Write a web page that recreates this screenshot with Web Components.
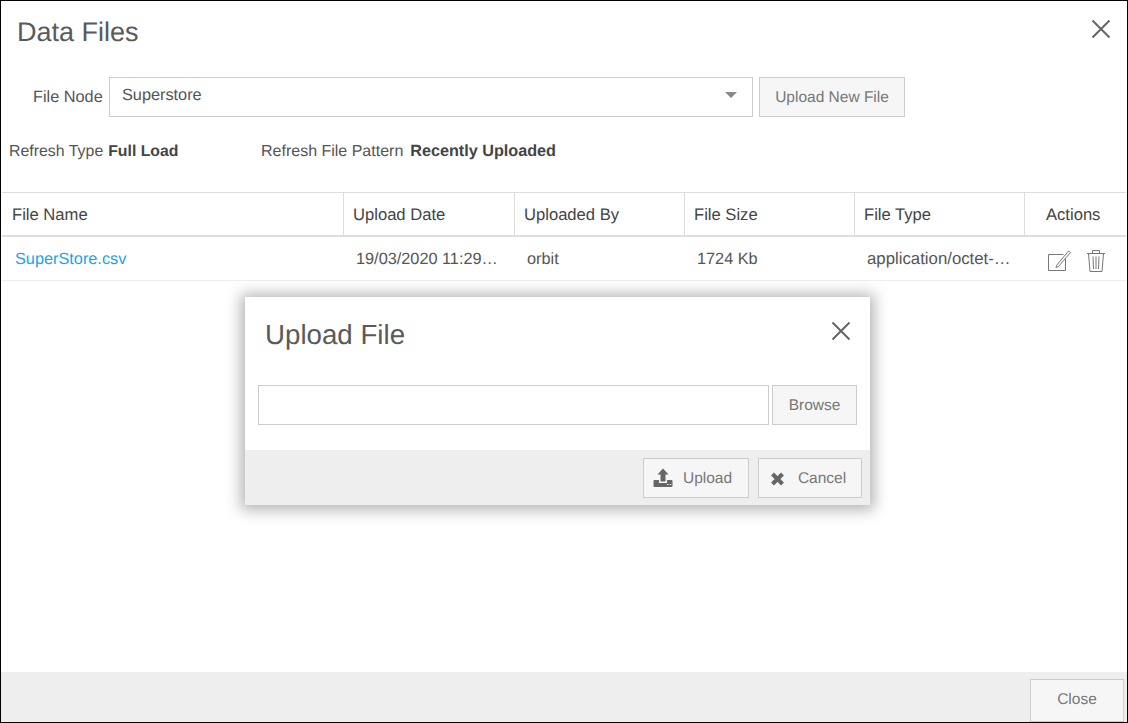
<!DOCTYPE html>
<html>
<head>
<meta charset="utf-8">
<title>Data Files</title>
<style>
html, body { margin: 0; padding: 0; background: #fff; }
body { font-family: "Liberation Sans", Arial, sans-serif; color: #555; text-rendering: geometricPrecision; }
</style>
</head>
<body>
<data-files-dialog></data-files-dialog>

<script>
const closeIcon = `<svg class="x" width="20" height="20" viewBox="0 0 20 20"><path d="M1.5 1.5L18.5 18.5M18.5 1.5L1.5 18.5" stroke="#666" stroke-width="2" fill="none"/></svg>`;

class AppButton extends HTMLElement {
    constructor() {
        super();
        const shadowRoot = this.attachShadow({ mode: 'open' });
        shadowRoot.innerHTML = `
<style>
:host{
    display: inline-flex;
    align-items: center;
    justify-content: center;
    box-sizing: border-box;
    height: 40px;
    padding-top: 2px;
    border: 1px solid #ccc;
    background: #f6f6f6;
    color: #777;
    font-size: 15.5px;
    cursor: pointer;
}
</style>
<slot></slot>`;
    }
}
customElements.define('app-button', AppButton);

class RefreshInfo extends HTMLElement {
    constructor() {
        super();
        const shadowRoot = this.attachShadow({ mode: 'open' });
        shadowRoot.innerHTML = `
<style>
:host{ display: flex; align-items: baseline; font-size: 16px; color: #555; line-height: 18px; }
.label{ margin-right: 6px; }
.first .label{ font-size: 15.9px; margin-right: 5px; }
.second .label{ margin-right: 7px; }
b{ color: #444; }
.first b{ font-size: 15.8px; }
.second b{ font-size: 16.2px; }
.first{ width: 252px; }
</style>
<span class="first"><span class="label">Refresh Type</span><b>Full Load</b></span>
<span class="second"><span class="label">Refresh File Pattern</span><b>Recently Uploaded</b></span>`;
    }
}
customElements.define('refresh-info', RefreshInfo);

class FileTable extends HTMLElement {
    constructor() {
        super();
        const shadowRoot = this.attachShadow({ mode: 'open' });
        shadowRoot.innerHTML = `
<style>
:host{ display: block; font-size: 16.3px; }
.head, .row{
    display: grid;
    grid-template-columns: 342px 171px 170px 170px 170px 1fr;
}
.head{
    height: 42px;
    border-top: 1px solid #ddd;
    border-bottom: 2px solid #ddd;
    color: #444;
    font-size: 16.6px;
}
.head div{
    display: flex;
    align-items: center;
    padding: 2px 0 0 9px;
    border-right: 1px solid #ddd;
    min-width: 0;
}
.head div:first-child{ padding-left: 10px; }
.head div:last-child{ border-right: 0; padding-left: 21px; }
.row{ height: 43px; border-bottom: 1px solid #eee; color: #555; }
.row div{
    display: flex;
    align-items: center;
    padding: 2px 0 0 12px;
    min-width: 0;
    white-space: nowrap;
}
.row div:first-child{ padding-left: 13px; }
.row a{ color: #22a3e3; text-decoration: none; }
.row .type{ font-size: 16.8px; padding-top: 1px; }
.row .actions{ padding: 4px 0 0 23px; gap: 15px; }
svg{ display: block; }
</style>
<div class="head">
    <div>File Name</div>
    <div>Upload Date</div>
    <div>Uploaded By</div>
    <div>File Size</div>
    <div>File Type</div>
    <div>Actions</div>
</div>
<div class="row">
    <div><a href="#">SuperStore.csv</a></div>
    <div>19/03/2020 11:29…</div>
    <div>orbit</div>
    <div>1724 Kb</div>
    <div class="type">application/octet-…</div>
    <div class="actions">
        <svg width="23" height="22" viewBox="0 0 23 22"><path d="M15.5 4.500H0.500V20.500H17.500V8" fill="none" stroke="#777"/><path d="M8.500 15.500L20.500 1L22.500 2.500L10.500 16.500L8 17.500Z" fill="#fff" stroke="#777"/></svg>
        <svg width="20" height="24" viewBox="0 0 20 24"><path d="M1 4.500H19M6.500 4.500V1.500H13.500V4.500M2.500 4.500L4 22.500H16L17.500 4.500M7 7.500L7.500 20M10 7.500V20M13 7.500L12.500 20" fill="none" stroke="#777"/></svg>
    </div>
</div>`;
    }
}
customElements.define('file-table', FileTable);

class UploadDialog extends HTMLElement {
    constructor() {
        super();
        const shadowRoot = this.attachShadow({ mode: 'open' });
        shadowRoot.innerHTML = `
<style>
:host{
    display: flex;
    flex-direction: column;
    position: absolute;
    left: 244px;
    top: 296px;
    width: 625px;
    height: 208px;
    background: #fff;
    box-shadow: 0 1px 14px 4px rgba(0,0,0,.3);
}
.top{
    display: flex;
    justify-content: space-between;
    align-items: center;
    height: 76px;
    padding: 0 19px 0 20px;
    font-size: 27.7px;
    color: #5a5a5a;
}
.x{ margin-top: -8px; }
.file{
    display: flex;
    gap: 3px;
    padding: 12px 13px 0;
    height: 65px;
}
.input{
    width: 511px;
    height: 40px;
    box-sizing: border-box;
    border: 1px solid #ccc;
}
.browse{ width: 85px; }
.foot{
    flex: 1;
    display: flex;
    justify-content: flex-end;
    align-items: center;
    gap: 9px;
    padding-right: 8px;
    background: #eee;
}
.upload{ width: 106px; padding-right: 7px; }
.cancel{ width: 104px; padding-right: 4px; }
.btn{ display: flex; align-items: center; }
svg{ display: block; }
</style>
<div class="top"><span>Upload File</span>${closeIcon}</div>
<div class="file">
    <div class="input"></div>
    <app-button class="browse">Browse</app-button>
</div>
<div class="foot">
    <app-button class="upload"><span class="btn"><svg width="20" height="20" viewBox="0 0 20 20" style="margin:-2px 10px 0 0"><path d="M10 0.500L15.500 6.500H12.500V13.500H7.500V6.500H4.500Z M1.500 12H6V15H14V12H18.500Q19.500 12 19.500 13V18Q19.500 19 18.500 19H1.500Q0.500 19 0.500 18V13Q0.500 12 1.500 12Z" fill="#666"/><path d="M14 16.500h1.500M16.800 16.500h1.500" stroke="#eee"/></svg>Upload</span></app-button>
    <app-button class="cancel"><span class="btn"><svg width="15" height="14" viewBox="0 0 15 14" style="margin-right:13px"><path d="M2.500 2L12.500 12M12.500 2L2.500 12" stroke="#666" stroke-width="4" fill="none"/></svg>Cancel</span></app-button>
</div>`;
    }
}
customElements.define('upload-dialog', UploadDialog);

class DataFilesDialog extends HTMLElement {
    constructor() {
        super();
        const shadowRoot = this.attachShadow({ mode: 'open' });
        shadowRoot.innerHTML = `
<style>
:host{
    display: flex;
    flex-direction: column;
    position: relative;
    box-sizing: border-box;
    width: 1128px;
    height: 723px;
    border: 1px solid #000;
    font-family: "Liberation Sans", Arial, sans-serif;
    overflow: hidden;
}
.top{
    display: flex;
    justify-content: space-between;
    align-items: center;
    height: 60px;
    padding: 2px 16px 0;
    box-sizing: border-box;
    font-size: 27px;
    color: #5a5a5a;
}
.x{ margin-top: -6px; }
.node{
    display: flex;
    align-items: center;
    height: 40px;
    margin-top: 16px;
    padding-left: 32px;
    font-size: 16.3px;
    color: #555;
}
.node label{ width: 76px; }
.select{
    display: flex;
    justify-content: space-between;
    align-items: center;
    box-sizing: border-box;
    width: 644px;
    height: 40px;
    padding: 0 15px 4px 12px;
    border: 1px solid #ccc;
    margin-right: 6px;
}
.caret{
    width: 0;
    height: 0;
    border-left: 6px solid transparent;
    border-right: 6px solid transparent;
    border-top: 6px solid #888;
}
.new{ width: 146px; }
refresh-info{ margin: 25px 0 0 8px; }
file-table{ margin: 31px 1px 0 1px; }
.space{ flex: 1; }
.foot{
    display: flex;
    justify-content: flex-end;
    align-items: flex-end;
    height: 50px;
    background: #eee;
    padding-right: 3px;
}
.close{ width: 94px; height: 43px; padding-top: 0; padding-bottom: 1px; }
</style>
<div class="top"><span>Data Files</span>${closeIcon}</div>
<div class="node">
    <label>File Node</label>
    <div class="select"><span>Superstore</span><span class="caret"></span></div>
    <app-button class="new">Upload New File</app-button>
</div>
<refresh-info></refresh-info>
<file-table></file-table>
<div class="space"></div>
<div class="foot"><app-button class="close">Close</app-button></div>
<upload-dialog></upload-dialog>`;
    }
}
customElements.define('data-files-dialog', DataFilesDialog);
</script>
</body>
</html>
